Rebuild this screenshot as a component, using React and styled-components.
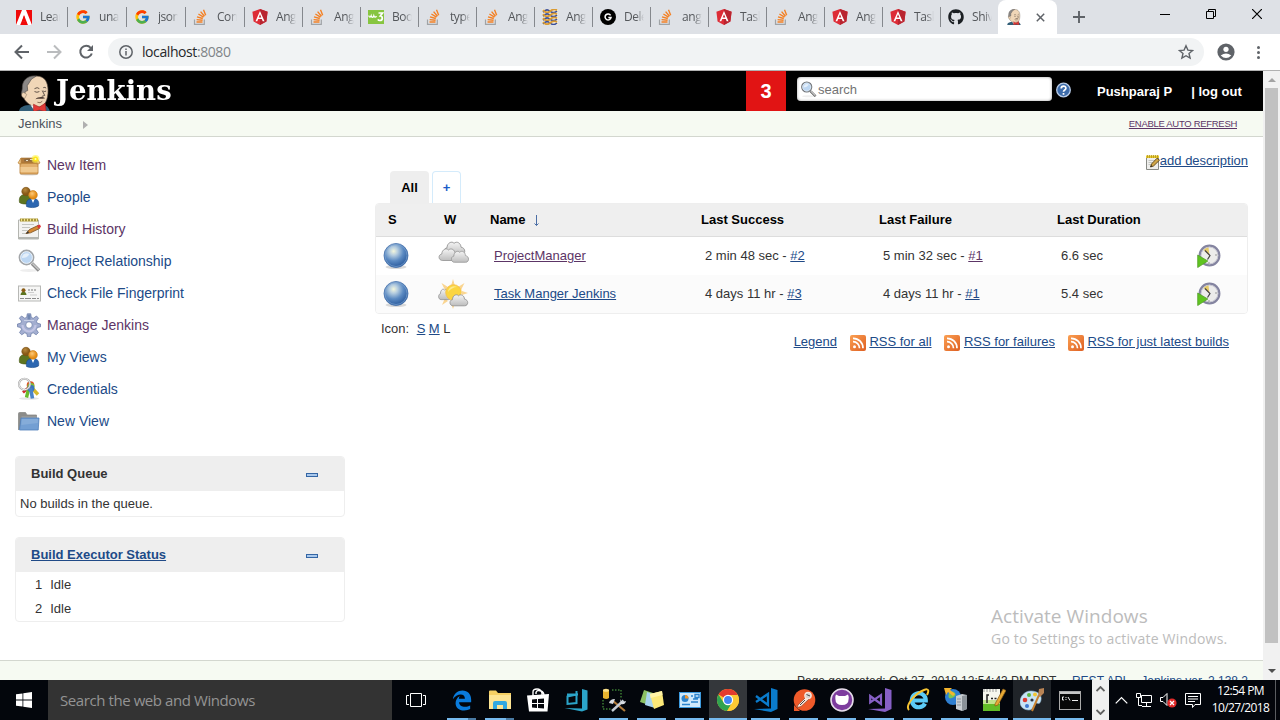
import React from "react";
import styled, { createGlobalStyle, css } from "styled-components";
import { FcGoogle } from "react-icons/fc";
import { FaGithub } from "react-icons/fa";

const UI = `"Open Sans", "Noto Sans", sans-serif`;
const LINK = "#204a87";
const VISITED = "#5c3566";

const Global = createGlobalStyle`
  * { box-sizing: border-box; }
  body { margin: 0; background: #fff; overflow: hidden; }
  svg { display: block; flex: none; }
`;

/* ---------- small drawings ---------- */

const Svg = ({ w = 16, h = w, box, children }) => (
  <svg width={w} height={h} viewBox={box || `0 0 ${w} ${h}`} fill="none">{children}</svg>
);

const AdobeIcon = () => (
  <Svg>
    <path d="M0 1h16v15H0z" fill="#f00a0a" />
    <path d="M0 16 6 1h4l6 15h-4.600l-1.400-3.500H7.300L8.900 9 8 6.500 4.200 16z" fill="#fff" />
    <path d="m8 6 3.900 10H9.700l-1.200-3.200H6z" fill="#f00a0a" />
  </Svg>
);

const StackIcon = () => (
  <Svg>
    <path d="M1.500 10.500v4.800h9.800v-4.800" stroke="#a0a3a6" strokeWidth="1.200" />
    <path d="M3.500 13h6M3.600 10.600l6 .6M4 7.800l5.800 1.700M5.400 5l5.100 3.200M7.600 2.600l3.900 4.700M10.500.8l2.200 5.500" stroke="#f48024" strokeWidth="1.400" />
  </Svg>
);

const AngularIcon = () => (
  <Svg>
    <path d="M8 0 15.600 2.700 14.400 12.500 8 16 1.600 12.500.4 2.700z" fill="#dd2c36" />
    <path d="M8 0l7.600 2.700-1.200 9.800L8 16z" fill="#b92530" />
    <path d="M8 2 3.500 12.200h1.800l.9-2.300h3.600l.9 2.300h1.800zM8 5.300l1.300 3.200H6.700z" fill="#fff" fillRule="evenodd" />
  </Svg>
);

const W3Icon = () => (
  <Svg>
    <rect y="1" width="16" height="14" fill="#87c540" />
    <path d="M.8 6.500c.2 2 1.800 2 2.400.3.500 1.900 2 1.900 2.600 0 .5 1.700 1.800 1.900 2.700.4" stroke="#fff" strokeWidth="1.300" />
    <path d="M10.500 4h4l-2.200 3c2.700.2 2.700 4.600-.5 4.500-1 0-1.600-.5-1.900-1.200" stroke="#fff" strokeWidth="1.700" />
  </Svg>
);

const WaveIcon = () => (
  <Svg>
    <rect width="16" height="16" fill="#f1ead8" />
    {[2.200, 6.200, 10.200, 14].map((y) => (
      <g key={y}>
        <path d={`M1 ${y + 1}q3.500-4 7-1t7 0`} stroke="#3a4f9c" strokeWidth="1.600" />
        <path d={`M1 ${y - 1}q3.500 4 7 1t7-1`} stroke="#d99a33" strokeWidth="1.800" />
      </g>
    ))}
  </Svg>
);

const GIcon = () => (
  <Svg>
    <circle cx="8" cy="8" r="8" fill="#000" />
    <path d="M10.600 6.300A3 3 0 1 0 11 8.500H8.300" stroke="#fff" strokeWidth="1.500" />
  </Svg>
);

const Butler = ({ w = 16, h = 16 }) => (
  <Svg w={w} h={h} box="0 0 34 38">
    <path d="M1 38c0-4 3-6 8-7l16-1c5 1 7 4 8 8z" fill="#335f78" />
    <path d="M9 28C5 24 4 19 5 14 6 5 12 1 19 1c9 0 12 7 12 15 0 9-3 17-10 17-5 0-9-2-12-5z" fill="#f0d6b7" stroke="#4c4038" strokeWidth=".7" />
    <path d="M19 1C9 0 4 6 4.500 14l-1 5 3 3 1-5 2.500-1-.5-5L14 4z" fill="#8b8886" stroke="#55504d" strokeWidth=".7" />
    <path d="M6 18c-3 0-3.500 5 1 6l2-4z" fill="#f0d6b7" stroke="#7b6a58" strokeWidth=".5" />
    <path d="M17 14q3-2 5 0M26 13q2-1 3 .5" stroke="#4d4139" strokeWidth=".9" />
    <path d="M17 17q2.500 1.500 5 0M26 16.500q1.500 1 3 0M25 16l2.500 5-3 1" stroke="#4d4139" strokeWidth=".9" />
    <path d="M18 25c2-3 8-3 10-1-3 1-7 0-10 1z" fill="#4e3d35" />
    <path d="M20 28q3 1.500 5-1" stroke="#7d5f4a" strokeWidth=".9" />
    <path d="m13 31 4 6 3-5z" fill="#f5f5f5" />
    <path d="m16 30 6 3 6-4 1 9-7-2-6 2z" fill="#e13a36" stroke="#a32020" strokeWidth=".6" />
  </Svg>
);

const Plus = () => <Svg w={12}><path d="M6 0v12M0 6h12" stroke="#5f6368" strokeWidth="1.900" /></Svg>;
const TabClose = () => <Svg w={9}><path d="m.8.800 7.400 7.400m0-7.400L.8 8.200" stroke="#5f6368" strokeWidth="1.500" /></Svg>;

const Magnifier = ({ w = 24, dark }) => (
  <Svg w={w} box="0 0 24 24">
    <ellipse cx="12" cy="21.500" rx="9" ry="1.500" fill="#eee" />
    <path d="m15 14.500 7 7" stroke={dark ? "#555" : "#8a8a8a"} strokeWidth="3.400" />
    <path d="m15.500 14.500 6.300 6.300" stroke="#c6c6c6" strokeWidth="1.600" />
    <circle cx="9.500" cy="8.500" r="7" fill="#bcd6f2" stroke={dark ? "#6f7378" : "#a2a5a8"} strokeWidth="1.800" />
    <circle cx="9.500" cy="8.500" r="5.900" stroke="#eef5fc" strokeWidth=".9" />
    <path d="M5 9c0-4 4-6 7.500-4-2 3-4 4-7.500 4" fill="#e4effa" />
  </Svg>
);

const BoxIcon = () => (
  <Svg w={24}>
    <ellipse cx="12" cy="21.500" rx="9" ry="1" fill="#ddd" />
    <path d="M3 10h18v10q0 1-1 1H4q-1 0-1-1z" fill="#e2b06d" stroke="#b57a31" strokeWidth=".8" />
    <path d="M3.500 14h17v5h-17z" fill="#f0ca90" />
    <path d="M4 5h15l1 5H4z" fill="#b37c3c" stroke="#a46f2c" strokeWidth=".6" />
    <path d="m4 5-3 5 3 1.500V8zm16 0 3 5-3 1.500V8zM3 10.500h18" fill="#edc58a" stroke="#c08b43" strokeWidth=".8" />
    <path d="M7 6.500q4-2 9 0v2H7z" fill="#8e6b40" />
    <path d="M9 7.500h2m2-1h3" stroke="#e8e0cc" strokeWidth="1.200" />
    <circle cx="18.500" cy="6" r="4" fill="#fff34d" opacity=".6" />
    <circle cx="18.500" cy="6" r="2.500" fill="#ffe81a" />
    <circle cx="18.500" cy="6" r="1" fill="#fffbc2" />
  </Svg>
);

const PeopleIcon = () => (
  <Svg w={24}>
    <defs>
      <radialGradient id="headA" cx=".4" cy=".3"><stop stopColor="#b98a3e" /><stop offset="1" stopColor="#875815" /></radialGradient>
      <radialGradient id="headB" cx=".4" cy=".35"><stop stopColor="#fdc878" /><stop offset="1" stopColor="#e58e16" /></radialGradient>
    </defs>
    <g transform="translate(0 .5)">
      <path d="M2.500 17c-1-6 2-8 5.500-8s6.500 2 6.500 8c-3 2-9 2-12 0z" fill="#5d7420" stroke="#41540f" strokeWidth=".6" />
      <circle cx="9" cy="6" r="4.200" fill="url(#headA)" stroke="#7a4f12" strokeWidth=".6" />
      <path d="M9.500 21c-1-6 2-8 6.500-8s6.500 2.500 5.500 7.500c-3 2-9 2-12 .5z" fill="#2c66b0" stroke="#1d4a86" strokeWidth=".6" />
      <path d="m14.300 13.500 1.700 4 1.700-4z" fill="#fff" />
      <circle cx="16" cy="9.400" r="4.300" fill="url(#headB)" stroke="#c57610" strokeWidth=".6" />
    </g>
  </Svg>
);

const NotepadIcon = ({ w = 24 }) => (
  <Svg w={w} box="0 0 24 24">
    <path d="M1.500 3h20v19h-20z" fill="#f3f3f1" stroke="#b4b5b0" />
    <path d="M1.500 20h20v2h-20z" fill="#b4b6b1" />
    <path d="M3 1.500h18v3H3z" fill="#a7953a" />
    <path d="M4.500 1.500v3m3-3v3m3-3v3m3-3v3m3-3v3m3-3v3" stroke="#efe08a" />
    <path d="M5 7.500h12m-12 3h8m-8 3h7m-7 3h6" stroke="#c4c6c2" />
    <path d="m9 16.500 3.500-4L21 8.500l1.500 3-9 4.300z" fill="#d58a34" stroke="#7a4e1a" strokeWidth=".8" />
    <path d="m20 8.800 3-1.300 1 2.500-2.500 1.500z" fill="#d33" />
    <path d="m9 16.500 2-2.500 1 2z" fill="#333" />
  </Svg>
);

const EditIcon = () => (
  <Svg>
    <path d="M1.500 3h12v12.500h-12z" fill="#eeeeec" stroke="#888a85" />
    <path d="M1 1.500h13V4H1z" fill="#e8c92f" />
    <path d="M2.500 1v3m2-3v3m2-3v3m2-3v3m2-3v3m2-3v3" stroke="#b39718" strokeWidth=".8" />
    <path d="M3.500 6.500h7m-7 2h5m-5 2h4" stroke="#c4c6c2" />
    <path d="m5.500 13 1-3L12 4.200l2.500 2L8.500 12z" fill="#d0a646" stroke="#5d4517" strokeWidth=".9" />
    <path d="m5.500 13 .6-1.800 1.400 1z" fill="#222" />
  </Svg>
);

const CardIcon = () => (
  <Svg w={24}>
    <rect x="1.500" y="5" width="22" height="15" fill="#f6f6f5" stroke="#b7b8b5" />
    <path d="M3.500 14c0-4.500 6-4.500 6 0z" fill="#5d7420" />
    <circle cx="6.500" cy="9.200" r="2" fill="#8b5d17" />
    <path d="M11 9h8" stroke="#777" strokeDasharray="2 1" />
    <path d="M11 11.500h6m-4 2.500h7" stroke="#cdcdcd" />
    <path d="M3 17.500h19" stroke="#8a8a8a" strokeDasharray="4 1 6 1" />
  </Svg>
);

const GearIcon = () => (
  <Svg w={24}>
    <g fill="#a3aed0" stroke="#7080ab" strokeWidth=".8">
      <path d="M10.300.8h3.400l.6 3.700 2 .8L19.500 3l2 2.200-2 3.100.8 2 3.200.7v2.800l-3.200.7-.9 2.100 2 3-2.200 2.200-3-2-2 .8-.7 3.200h-3l-.7-3.200-2.100-.8-3 2-2.200-2.200 2-3-.8-2.100-3.200-.7V11l3.200-.7.9-2.100-2.200-3L4.500 3l3.200 2.200 2-.8z" />
      <circle cx="12" cy="12" r="3.300" fill="#fff" />
    </g>
    <path d="M7 7.500h10" stroke="#c9d1e6" strokeWidth="1" />
    <path d="M5.500 12a6.500 6.500 0 0 0 13 0" stroke="#c2c5e4" strokeWidth="2.200" />
    <path d="M10.500 1.500h3v5h-3z" fill="#7187b0" />
  </Svg>
);

const KeysIcon = () => (
  <Svg w={24}>
    <ellipse cx="12" cy="21.500" rx="10" ry="1.300" fill="#e6e6e6" />
    <path d="m14 10 7 7.500" stroke="#d6b92c" strokeWidth="3.400" />
    <path d="m11 11-5 4.500" stroke="#d02b2b" strokeWidth="2.800" />
    <path d="M12 10 9.500 20.500" stroke="#69bb2a" strokeWidth="3.400" />
    <circle cx="13.500" cy="8" r="3.800" fill="#e05124" />
    <circle cx="14" cy="9.500" r="3.600" fill="#7fbf3a" />
    <circle cx="14" cy="11.500" r="3.400" fill="#3c74bd" />
    <path d="m13.500 11 2 10.500" stroke="#4a83c8" strokeWidth="3.600" />
    <circle cx="7.500" cy="7.200" r="5.500" stroke="#a6a6a6" strokeWidth="2" />
    <circle cx="7.500" cy="7.200" r="5.500" stroke="#f6f6f6" strokeWidth=".9" />
  </Svg>
);

const FolderIcon = () => (
  <Svg w={24}>
    <path d="M1.500 21V4.500q0-1 1-1h6L10 6h9.500v4" fill="#8c8c8a" stroke="#8a8b88" strokeWidth=".8" />
    <path d="M4.500 7.500h15V12h-15z" fill="#a5a6a4" />
    <path d="M4 9h18l-.8 12H2.500z" fill="#739fd3" stroke="#4f7fba" strokeWidth=".8" />
    <path d="m4.800 10 16.300 0-.3 4-16.400 2z" fill="#85acd9" />
  </Svg>
);

const Ball = () => (
  <Svg w={28}>
    <defs>
      <radialGradient id="ball" cx=".4" cy=".32" r=".68">
        <stop stopColor="#f4f7dc" /><stop offset=".25" stopColor="#b7cee0" /><stop offset=".6" stopColor="#5b8ac2" /><stop offset="1" stopColor="#2a5a9c" />
      </radialGradient>
    </defs>
    <ellipse cx="14" cy="25" rx="10.500" ry="2" fill="#c9c9c9" opacity=".7" />
    <circle cx="14" cy="13.500" r="12" fill="url(#ball)" stroke="#4470ab" strokeWidth=".8" />
    <circle cx="14" cy="13.500" r="11" stroke="#7ba2d0" strokeWidth=".7" />
  </Svg>
);

const cloud = "M5 14c-5 0-5-6-1-6.500C4 3 9 1 11 3.500 14 1 18 3.500 18 7c5 .5 5 7 0 7z";
const Clouds = () => (
  <Svg w={32} h={32}>
    <defs><linearGradient id="cloud" x2="0" y2="1"><stop stopColor="#f4f4f4" /><stop offset="1" stopColor="#bdbdbd" /></linearGradient></defs>
    <g fill="url(#cloud)" stroke="#8f8f8f" strokeWidth=".8">
      <path d={cloud} transform="translate(6 -.5) scale(1 1.100)" />
      <path d={cloud} transform="translate(1 6.500) scale(.95 1)" />
      <path d={cloud} transform="translate(13.500 9) scale(.83 .95)" />
    </g>
  </Svg>
);
const SunClouds = () => (
  <Svg w={32} h={32}>
    <path d="m16 1 2 7h-4zm0 30 2-6h-4zM4.500 5 11 9l-3 3zm23 0L21 9l3 3zM3 16l6-2v4zm28-1-6-2v4zM5 27l3-7 3 3zm22 0-3-7-3 3z" fill="#fad591" />
    <path d={cloud} transform="translate(1 9) scale(.6 .9)" fill="url(#cloud)" stroke="#8f8f8f" />
    <circle cx="16.500" cy="14.500" r="7.800" fill="#fbd540" stroke="#f5bd48" strokeWidth=".8" />
    <path d="M11 14a6 6 0 0 1 9-5c-3 0-7 2-9 5" fill="#fdea8d" />
    <path d={cloud} transform="translate(12 14.500) scale(.86 .95)" fill="url(#cloud)" stroke="#8f8f8f" strokeWidth=".9" />
  </Svg>
);

const BuildClock = () => (
  <Svg w={24}>
    <circle cx="12.500" cy="11.500" r="9.800" fill="#ececeb" stroke="#8484a0" strokeWidth="2.300" />
    <circle cx="12.500" cy="11.500" r="8.400" stroke="#c7c7d2" />
    <path d="m12.500 11.500-6-5.500q3-3 5-2.500z" fill="#e6cb68" />
    <path d="m8 6.500 5 5-2.500 4" stroke="#444" strokeWidth="1.200" />
    <path d="M18 11h2M12 18v2" stroke="#999" />
    <path d="M.7 11 10.800 17 .7 23.500z" fill="#5fc41f" stroke="#55a02c" strokeWidth=".8" />
  </Svg>
);

const RssIcon = () => (
  <Svg>
    <defs><linearGradient id="rss" x2="1" y2="1"><stop stopColor="#fba052" /><stop offset="1" stopColor="#de5f22" /></linearGradient></defs>
    <rect width="16" height="16" rx="2" fill="url(#rss)" />
    <circle cx="4.500" cy="11.800" r="1.500" fill="#fff" />
    <path d="M3 6.700a6.400 6.400 0 0 1 6.500 6.500M3 3.300a9.800 9.800 0 0 1 10 10" stroke="#fff" strokeWidth="1.700" />
  </Svg>
);

const HelpIcon = () => (
  <Svg>
    <circle cx="7.500" cy="8" r="6.800" fill="#3d6cab" stroke="#b9cce8" strokeWidth="1.300" />
    <path d="M5.200 6.500c0-3 4.700-3 4.700-.3C9.900 8 7.500 7.900 7.500 9.800M7.500 11v1.800" stroke="#fff" strokeWidth="1.700" />
  </Svg>
);

const Collapse = () => (
  <Svg w={12} h={4}><rect x=".5" y=".5" width="11" height="3" fill="#a9c8ec" stroke="#3465a4" /></Svg>
);

const Chevron = ({ up, color = "#606060", w = 9, h = 6, sw = 1.800 }) => (
  <Svg w={w} h={h} box="0 0 9 6"><path d={up ? "M.5 5 4.500 1l4 4" : "m.5 1 4 4 4-4"} stroke={color} strokeWidth={sw} /></Svg>
);

/* ---------- taskbar drawings ---------- */

const EdgeE = () => (
  <Svg w={20} h={21} box="0 0 24 24">
    <path d="M1 10.500C2 4 7 0 12.500 0 19 0 23 4.500 23 11v3H8.500c.3 4 3.500 5.500 7 5.500 2.500 0 4.500-.6 6.300-1.600v4.400C20 23.400 17.500 24 14.500 24 8 24 4.500 20 4.300 15.500 4.200 12 6 8.500 9.500 6.700 8.500 8 8.300 9.300 8.300 10h7.200C15.500 6.500 13.500 4.700 10.500 4.700 7 4.700 3.500 7 1 10.500z" fill="#0a7bdc" />
  </Svg>
);
const IeIcon = () => (
  <Svg w={24}>
    <path d="M19 15.500A7 7 0 1 1 19.800 12.500H7" stroke="#5ccbf8" strokeWidth="4.200" />
    <path d="M3 22C-1 18 8 6 18 2c5-2 5 1 3 5" stroke="#f6c433" strokeWidth="2" />
  </Svg>
);
const Explorer = () => (
  <Svg w={22} h={20}>
    <path d="M0 1.500Q0 .5 1 .5h6l2 2.500h13v16H0z" fill="#f5cf63" />
    <path d="M0 5h22v14H0z" fill="#fde493" />
    <path d="M4 19v-6q0-2 2-2h10q2 0 2 2v6h-4v-4H8v4z" fill="#31a8e0" />
  </Svg>
);
const Store = () => (
  <Svg w={22} h={24}>
    <path d="M6 8V4q0-3 4-3t5 4v2M9 6V4.500q1-3 5-1.500 3 1 3 5" stroke="#fff" strokeWidth="1.400" />
    <path d="M0 7.500 22 6l-1.500 17.500H2z" fill="#fff" />
    <path d="m5 11.500 5-.5v4H5zm6-.6 6-.5V15h-6zM5 16h5v4l-5-.4zm6 0h6v4.600l-6-.5z" fill="#05070c" />
  </Svg>
);
const Blend = () => (
  <Svg w={24}>
    <path d="m18 1 5.500 1.500v19L18 23.500.500 20l17.500.5z" fill="#2ba4c9" />
    <path d="m3.500 8.500 9-2v8.500l-9 1zM3 6.500h11M12.500 3v4" stroke="#2ba4c9" strokeWidth="2" />
  </Svg>
);
const Tools = () => (
  <Svg w={24}>
    <path d="M1 2v8q3.500 2 6 0V2z" fill="#e8b32f" /><ellipse cx="4" cy="2.200" rx="3" ry="1.500" fill="#fbe18a" />
    <path d="M10 2h9v9M1 12v9h9" stroke="#58b947" strokeDasharray="1.500 1.500" />
    <path d="m11 13 12 10" stroke="#b07a3a" strokeWidth="2.200" />
    <path d="M21.500 12.500 10 23" stroke="#c6ccd4" strokeWidth="2.400" />
    <path d="M7 15q1-4 6-4l-2 5zm11-4 2 3 4-1q-1 4-5 3z" fill="#d8dde3" />
  </Svg>
);
const Stickies = () => (
  <Svg w={24} h={20}>
    <path d="m4 0 12 4-4 12L0 12z" fill="#8cc063" /><path d="m7 2 12 4-4 12-10-3z" fill="#a9d4ee" />
    <path d="m10 4 12-3 2 14-10 4z" fill="#fbe878" /><path d="m10 4 12-3 .5 4-12 3z" fill="#fff3a6" />
  </Svg>
);
const Panel = () => (
  <Svg w={22} h={16}>
    <rect width="22" height="16" fill="#3d9be0" /><rect x="1" y="1" width="20" height="14" fill="#cfe9fb" />
    <circle cx="6" cy="6.500" r="3.500" fill="#2c83cc" /><path d="M6 6.500V3A3.500 3.500 0 0 1 9.500 6.500z" fill="#f0962e" />
    <path d="M12 4h2m0 3h5m-7 3h7M3 12.500h8M16 2.500h4v3h-4z" stroke="#2c83cc" strokeWidth="1.300" />
  </Svg>
);
const Chrome = () => (
  <Svg w={22} box="0 0 24 24">
    <circle cx="12" cy="12" r="12" fill="#fcc934" />
    <path d="M12 12 1.600 6A12 12 0 0 1 22.400 6z" fill="#e33b2e" />
    <path d="M1.600 6A12 12 0 0 0 11 24l5.800-9.500L12 12l-5 2.500z" fill="#30a350" />
    <path d="M12 6.500h10.600a12 12 0 0 1-11.500 17.500l6-10z" fill="#fcc934" />
    <circle cx="12" cy="12" r="5.600" fill="#fff" /><circle cx="12" cy="12" r="4.300" fill="#4285f4" />
  </Svg>
);
const VsCode = () => (
  <Svg w={24}>
    <path d="m17 0 6.500 2v19L17 24 0 21l17-.5z" fill="#0a7bcc" />
    <path d="m2 8 12 9V6L2 14" stroke="#0a7bcc" strokeWidth="2.300" />
  </Svg>
);
const Postman = () => (
  <Svg w={23}>
    <circle cx="11.500" cy="11" r="10.800" fill="#ef5a2a" /><path d="M1 16v6h6z" fill="#ef5a2a" />
    <path d="m13 8-8 8-1 2.500 4-1 8-7.500z" fill="#fbe6dc" stroke="#7a3a22" strokeWidth=".6" />
    <circle cx="15" cy="6.500" r="3.200" fill="#d9d3d0" stroke="#fbe6dc" strokeWidth="1.200" />
    <path d="m12 11-5 5M13.500 5.500l3.500 1.500" stroke="#444" />
  </Svg>
);
const GitHubDesk = () => (
  <Svg w={24}>
    <circle cx="12" cy="12" r="11" fill="#7d3c9e" stroke="#e6ddea" strokeWidth="1.600" />
    <path d="M6 6.500 9 8h6l3-1.500q1 2 .6 4.500 0 6-6.600 6t-6.600-6Q5 8 6 6.500" fill="#fff" />
  </Svg>
);
const VisualStudio = () => (
  <Svg w={24}>
    <path d="m17 0 6.500 2v19L17 24 0 21l17-.5z" fill="#865fc5" />
    <path d="M2.200 8v6.500L13 7v9z" stroke="#865fc5" strokeWidth="2.200" />
  </Svg>
);
const Server = () => (
  <Svg w={24}>
    <circle cx="9" cy="9" r="8" fill="#2f7fd1" /><path d="M5 5q4-3 6 0t-3 5-3-5m7 8 4-2v4z" fill="#7cc553" />
    <path d="M0 0h8l-2 2 5 4-2 2-5-4-2 3z" fill="#f5b52e" />
    <path d="m12 8 6-2 5 1v14l-5 2-6-2z" fill="#c9ced3" /><path d="m18 8 5-1v14l-5 2z" fill="#8b9299" />
    <path d="M13 11h4m-4 3h4m-4 3h4" stroke="#8b9299" />
  </Svg>
);
const NotepadPP = () => (
  <Svg w={24}>
    <path d="M1 1h17v22H1z" fill="#f6f6ee" /><path d="M1 15h17v8H1z" fill="#62bd27" /><path d="M1 12h17v4H1z" fill="#c2e58e" />
    <path d="M2 1v3m3-3v3m3-3v3m3-3v3m3-3v3" stroke="#999" />
    <path d="M5 15V7h2m2 3.500h2m1.500 0h2" stroke="#222" strokeWidth="1.500" />
    <path d="m13 16 8-15 3 1.500-8 14.500-3 1z" fill="#e6a935" stroke="#8a5b16" strokeWidth=".7" />
  </Svg>
);
const Paint = () => (
  <Svg w={24}>
    <path d="M11 3c7 0 11 4 10 9s-3 3-5 3-2 7-7 7-9-3-9-8S4 3 11 3" fill="#c9e4f5" stroke="#8fbbd8" strokeWidth=".6" />
    <circle cx="5" cy="12" r="2.300" fill="#dd3d33" /><circle cx="9" cy="7" r="2" fill="#5cb745" /><circle cx="15" cy="6.500" r="2" fill="#f3c532" /><circle cx="7" cy="18" r="2" fill="#3f79d0" /><circle cx="12" cy="12" r="1.600" fill="#2b3340" />
    <path d="m12 23 7-16" stroke="#c9822f" strokeWidth="2" /><path d="m18 8 1-7 5-1v5l-4 4z" fill="#b98455" />
  </Svg>
);
const Cmd = () => (
  <Svg w={22} h={19}>
    <rect x=".5" y=".5" width="21" height="18" fill="#080808" stroke="#a9a9a9" /><path d="M1 1h20v2H1z" fill="#c6c6c6" />
    <path d="M5 6H3.500v3H5M7 6v1m0 1v1M9 6l2 3.500M13 9.500h6" stroke="#eee" />
  </Svg>
);

/* ---------- browser ---------- */

const Screen = styled.div`
  width: 1280px; height: 720px; overflow: hidden; display: flex; flex-direction: column;
  position: relative; font: 13px/16px "Liberation Sans", Arial, sans-serif; color: #333;
`;
const TabStrip = styled.div`
  height: 34px; flex: none; background: #dee1e6; padding-left: 9px; display: flex; align-items: stretch;
`;
const Tab = styled.div`
  width: ${(p) => p.$w}px; flex: none; display: flex; align-items: center; gap: 8px; padding-left: 7px; position: relative;
  &:not(:nth-of-type(17))::after {
    content: ""; position: absolute; right: 0; top: 7px; width: 1px; height: 20px; background: #85888d;
  }
`;
const TabTitle = styled.span`
  width: 20px; overflow: hidden; white-space: nowrap; font: 12px/16px ${UI}; letter-spacing: -0.45px; color: #54575b;
  mask-image: linear-gradient(90deg, #000 60%, transparent);
`;
const ActiveTab = styled.div`
  width: 59px; margin-left: -1px; flex: none; background: #fff; border-radius: 8px 8px 0 0; padding-left: 8px;
  display: flex; align-items: center; gap: 14px;
`;
const NewTab = styled.div` display: flex; align-items: center; margin-left: 16px; flex: 1; `;
const WindowButtons = styled.div` display: flex; gap: 36px; padding: 9px 18px 0 0; `;

const AddressRow = styled.div`
  height: 37px; flex: none; background: #fff; border-bottom: 1px solid #b1b1b1; display: flex; align-items: center; padding-left: 14px;
`;
const NavButtons = styled.div` display: flex; align-items: center; gap: 16px; width: 94px; `;
const Omnibox = styled.div`
  width: 1096px; height: 28px; border-radius: 14px; background: #f1f3f4; display: flex; align-items: center; padding: 0 10px 0 11px; gap: 9px;
`;
const Url = styled.div` flex: 1; font: 14px/20px ${UI}; letter-spacing: -0.42px; color: #808488; span { color: #26282b; } `;
const ToolIcons = styled.div` display: flex; align-items: center; gap: 17px; margin-left: 13px; `;

const Viewport = styled.div` display: flex; height: 609px; flex: none; `;
const Page = styled.div` width: 1263px; display: flex; flex-direction: column; `;
const ScrollTrack = styled.div`
  width: 17px; background: #f1f1f1; display: flex; flex-direction: column; align-items: center; padding-top: 7px;
`;
const Thumb = styled.div` width: 13px; height: 555px; background: #c1c1c1; margin: 6px 0 26px; `;

/* ---------- Jenkins page ---------- */

const Header = styled.header` height: 40px; background: #000; display: flex; flex: none; `;
const Brand = styled.div` width: 746px; padding: 4px 0 0 18px; display: flex; overflow: hidden; `;
const BrandName = styled.div`
  color: #fff; font: bold 27px/31px "DejaVu Serif", Georgia, serif; margin: 0 0 0 5px;
  transform: scaleX(1.02); transform-origin: 0 0; height: 30px;
`;
const Alerts = styled.div`
  width: 40px; background: #e11414; color: #fff; font-weight: bold; font-size: 20px; line-height: 40px; text-align: center;
`;
const SearchBox = styled.div`
  margin: 6px 4px 0 11px; width: 255px; height: 24px; border-radius: 4px; background: #fff; display: flex; align-items: center;
  padding: 1px 0 0 3px; gap: 1px; color: #737373; box-shadow: inset 0 0 3px #999;
`;
const HelpWrap = styled.div` padding-top: 11px; width: 41px; `;
const HeaderLink = styled.b` color: #fff; line-height: 41px; margin-right: ${(p) => p.$gap || 0}px; white-space: pre; `;
const Crumbs = styled.nav`
  height: 26px; flex: none; background: #f6faf2; border-bottom: 1px solid #d3d7cf; display: flex; align-items: center;
  padding: 0 26px 0 18px; color: #4d545d;
`;
const CrumbArrow = styled.i`
  border-left: 5px solid #b0b0b0; border-top: 4px solid transparent; border-bottom: 4px solid transparent; margin: 2px auto 0 21px;
`;
const RefreshLink = styled.a` color: ${VISITED}; text-decoration: underline; font-size: 9.500px; letter-spacing: -0.3px; `;

const Content = styled.div` height: 523px; flex: none; display: flex; `;
const Side = styled.aside` width: 345px; padding: 12px 0 0 15px; `;
const Task = styled.a`
  height: 32px; display: flex; align-items: center; gap: 6px; padding-left: 2px; font-size: 14px;
  color: ${(p) => (p.$visited ? VISITED : LINK)};
`;
const Pane = styled.section`
  width: 330px; margin-top: ${(p) => p.$top}px; border: 1px solid #eee; border-radius: 4px; overflow: hidden;
`;
const PaneHead = styled.div`
  height: 34px; background: #eee; font-weight: bold; padding: 0 26px 1px 15px; display: flex; align-items: center; justify-content: space-between;
  color: #333;
  a { color: ${LINK}; text-decoration: underline; }
  svg { margin-top: 2px; }
`;
const PaneBody = styled.div` height: ${(p) => p.$h}px; display: flex; flex-direction: column; padding: 5px 4px 0; `;
const Executors = styled(PaneBody)` padding: 1px 4px 0 19px; `;
const Executor = styled.div` display: flex; gap: 8px; height: 24px; align-items: center; `;

const Main = styled.main` flex: 1; padding: 0 15px 0 30px; `;
const Describe = styled.div` display: flex; justify-content: flex-end; height: 34px; padding-top: 16px; align-items: flex-start; svg { margin: 1px -1px 0 0; } `;
const A = styled.a` text-decoration: underline; color: ${(p) => (p.$visited ? VISITED : LINK)}; `;
const ViewTabs = styled.div` display: flex; gap: 3px; padding-left: 15px; height: 32px; `;
const ViewTab = styled.div`
  width: ${(p) => p.$w}px; border-radius: 4px 4px 0 0; font-weight: bold; text-align: center;
  ${(p) => p.$on
    ? css`background: #eee; color: #000; line-height: 33px;`
    : css`border: 1px solid #d4ebfb; border-bottom: 0; color: #1a5cc8; line-height: 31px;`}
`;
const Table = styled.div` border: 1px solid #eee; border-radius: 4px; overflow: hidden; height: 111px; `;
const Row = styled.div`
  display: grid; grid-template-columns: 56px 50px 211px 178px 178px 140px 1fr; align-items: center; height: 38px;
  background: ${(p) => (p.$alt ? "#fbfbfb" : "#fff")};
`;
const HeadRow = styled(Row)`
  height: 33px; background: #efefef; border-bottom: 1px solid #ddd; color: #000; font-weight: bold; padding-bottom: 1px;
`;
const Cell = styled.div` padding-left: ${(p) => p.$pad}px; white-space: nowrap; `;
const NameHead = styled(Cell)` display: flex; align-items: center; gap: 8px; padding-left: 8px; `;
const SortArrow = () => (
  <Svg w={7} h={14}><path d="M3.500 2v10.500M1.500 10.500l2 2 2-2" stroke="#4b6ea5" /></Svg>
);
const BelowTable = styled.div` display: flex; justify-content: space-between; padding: 7px 19px 0 6px; `;
const IconSizes = styled.div` display: flex; gap: 3.500px; span { margin-right: 4px; } `;
const Feeds = styled.div` display: flex; gap: 12.600px; padding-top: 13px; `;
const Feed = styled.div` display: flex; gap: 3.800px; svg { margin-top: 1px; } `;

const Footer = styled.footer`
  height: 20px; flex: none; background: #f6faf2; border-top: 1px solid #d3d7cf; overflow: hidden; display: flex; justify-content: flex-end;
  gap: 15.500px; padding: 12px 15px 0 0; font-size: 12px; white-space: nowrap;
`;

const Watermark = styled.div`
  position: absolute; left: 991px; top: 604px; color: #bcbcbc; font-family: ${UI}; white-space: nowrap;
  div { font-size: 19px; line-height: 25px; letter-spacing: 0.05px; }
  p { margin: 0; font-size: 14px; line-height: 19px; letter-spacing: 0.2px; }
`;

/* ---------- taskbar ---------- */

const Taskbar = styled.div` height: 40px; flex: none; background: #03060c; display: flex; color: #fff; `;
const Start = styled.div` width: 48px; display: flex; align-items: center; justify-content: center; `;
const WebSearch = styled.div`
  width: 344px; background: #333; color: #949494; font: 15px/40px ${UI}; padding-left: 12px; letter-spacing: -0.42px;
`;
const TaskView = styled.div` width: 51px; padding-left: 14px; display: flex; align-items: center; `;
const AppButton = styled.div`
  width: 38px; display: flex; align-items: center; justify-content: center; position: relative;
  background: ${(p) => p.$bg || "transparent"};
  &::after {
    content: ""; position: absolute; bottom: 0; height: 2px; background: #76b9ed;
    left: ${(p) => (p.$bg ? 0 : 4)}px; width: ${(p) => (!p.$run ? 0 : p.$bg ? 38 : 29)}px;
    ${(p) => p.$run === 2 && css`background: linear-gradient(90deg, #76b9ed 21px, #4a7ba4 21px);`}
  }
`;
const TrayScroll = styled.div`
  width: 17px; margin-left: 3px; background: #f0f0f0; display: flex; flex-direction: column; justify-content: space-between; align-items: center; padding: 6px 0 5px;
`;
const Tray = styled.div` display: flex; align-items: center; padding-left: 6px; gap: 8px; width: 97px; `;
const Clock = styled.div`
  width: 69px; padding-top: 2px; font: 12px/17px ${UI}; letter-spacing: -0.6px; text-align: center; white-space: nowrap;
`;

const tabs = [
  [AdobeIcon, "Lear"], [FcGoogle, "una"], [FcGoogle, "json"], [StackIcon, "Con"], [AngularIcon, "Ang"], [StackIcon, "Ang"],
  [W3Icon, "Boo"], [StackIcon, "type"], [StackIcon, "Ang"], [WaveIcon, "Ang"], [GIcon, "Dele"], [StackIcon, "ang"],
  [AngularIcon, "Task"], [StackIcon, "Ang"], [AngularIcon, "Ang"], [AngularIcon, "Task"], [FaGithub, "Shiv"],
];
const tasks = [
  [BoxIcon, "New Item", 1], [PeopleIcon, "People"], [NotepadIcon, "Build History", 1], [Magnifier, "Project Relationship"],
  [CardIcon, "Check File Fingerprint"], [GearIcon, "Manage Jenkins", 1], [PeopleIcon, "My Views"], [KeysIcon, "Credentials"], [FolderIcon, "New View"],
];
const jobs = [
  { w: Clouds, name: "ProjectManager", v: 1, ok: "2 min 48 sec", okN: "#2", bad: "5 min 32 sec", badN: "#1", badV: 1, d: "6.6 sec" },
  { w: SunClouds, name: "Task Manger Jenkins", ok: "4 days 11 hr", okN: "#3", bad: "4 days 11 hr", badN: "#1", d: "5.4 sec" },
];
const apps = [
  [EdgeE, 2], [Explorer, 2], [Store, 0], [Blend, 0], [Tools, 1], [Stickies, 1], [Panel, 1], [Chrome, 1, "#34373b"], [VsCode, 1],
  [Postman, 1], [GitHubDesk, 1], [VisualStudio, 1], [IeIcon, 1], [Server, 1], [NotepadPP, 1], [Paint, 1, "#202429"], [Cmd, 1],
];

export default function App() {
  return (
    <Screen>
      <Global />
      <TabStrip>
        {tabs.map(([Icon, title], i) => (
          <Tab key={i} $w={i < 4 ? 59 : 58}>
            <Icon size={16} color="#1b1f23" />
            <TabTitle>{title}</TabTitle>
          </Tab>
        ))}
        <ActiveTab><Butler /><TabClose /></ActiveTab>
        <NewTab><Plus /></NewTab>
        <WindowButtons>
          <Svg w={10}><path d="M0 5.500h10" stroke="#000" /></Svg>
          <Svg w={10}><path d="M.5 2.500h7v7h-7zM2.500 2.500v-2h7v7h-2" stroke="#000" /></Svg>
          <Svg w={10}><path d="m0 0 10 10M10 0 0 10" stroke="#000" strokeWidth="1.200" /></Svg>
        </WindowButtons>
      </TabStrip>
      <AddressRow>
        <NavButtons>
          <Svg><path d="M15 8H2m6-6.500L1.500 8 8 14.500" stroke="#5f6368" strokeWidth="2" /></Svg>
          <Svg><path d="M1 8h13M8 1.500 14.500 8 8 14.500" stroke="#babcbe" strokeWidth="2" /></Svg>
          <Svg><path d="M12.700 3.800A5.900 5.900 0 1 0 13.800 9.500" stroke="#5f6368" strokeWidth="2" /><path d="M15 1v6H9z" fill="#5f6368" /></Svg>
        </NavButtons>
        <Omnibox>
          <Svg w={14}><circle cx="7" cy="7" r="6.200" stroke="#5f6368" strokeWidth="1.500" /><path d="M7 6v4.500M7 3.500V5" stroke="#5f6368" strokeWidth="1.500" /></Svg>
          <Url><span>localhost</span>:8080</Url>
          <Svg><path d="m8 1.800 1.900 4.300 4.700.4-3.600 3 1.100 4.600L8 11.700l-4.100 2.400L5 9.500l-3.600-3 4.700-.4z" stroke="#5f6368" strokeWidth="1.400" /></Svg>
        </Omnibox>
        <ToolIcons>
          <Svg w={18}><circle cx="9" cy="9" r="8.600" fill="#5f6368" /><circle cx="9" cy="6.300" r="2.600" fill="#fff" /><path d="M3.700 12.400q5.300-4 10.600 0Q9 17.500 3.700 12.400" fill="#fff" /></Svg>
          <Svg w={12} h={16}><g fill="#5f6368"><circle cx="6.500" cy="3.500" r="1.500" /><circle cx="6.500" cy="8.500" r="1.500" /><circle cx="6.500" cy="13.500" r="1.500" /></g></Svg>
        </ToolIcons>
      </AddressRow>

      <Viewport>
        <Page>
          <Header>
            <Brand><Butler w={33} h={37} /><BrandName>Jenkins</BrandName></Brand>
            <Alerts>3</Alerts>
            <SearchBox><Magnifier w={17} dark />search</SearchBox>
            <HelpWrap><HelpIcon /></HelpWrap>
            <HeaderLink $gap={19}>Pushparaj P</HeaderLink>
            <HeaderLink>| log out</HeaderLink>
          </Header>
          <Crumbs>Jenkins<CrumbArrow /><RefreshLink>ENABLE AUTO REFRESH</RefreshLink></Crumbs>
          <Content>
            <Side>
              {tasks.map(([Icon, label, v]) => (
                <Task key={label} $visited={v}><Icon />{label}</Task>
              ))}
              <Pane $top={19}>
                <PaneHead>Build Queue<Collapse /></PaneHead>
                <PaneBody $h={25}>No builds in the queue.</PaneBody>
              </Pane>
              <Pane $top={20}>
                <PaneHead><a>Build Executor Status</a><Collapse /></PaneHead>
                <Executors $h={49}>
                  <Executor><span>1</span><span>Idle</span></Executor>
                  <Executor><span>2</span><span>Idle</span></Executor>
                </Executors>
              </Pane>
            </Side>
            <Main>
              <Describe><EditIcon /><A>add description</A></Describe>
              <ViewTabs><ViewTab $w={39} $on>All</ViewTab><ViewTab $w={29}>+</ViewTab></ViewTabs>
              <Table>
                <HeadRow>
                  <Cell $pad={12}>S</Cell><Cell $pad={12}>W</Cell><NameHead>Name<SortArrow /></NameHead>
                  <Cell $pad={8}>Last Success</Cell><Cell $pad={8}>Last Failure</Cell><Cell $pad={8}>Last Duration</Cell><Cell />
                </HeadRow>
                {jobs.map((j, i) => (
                  <Row key={j.name} $alt={i}>
                    <Cell $pad={6}><Ball /></Cell>
                    <Cell $pad={5}><j.w /></Cell>
                    <Cell $pad={12}><A $visited={j.v}>{j.name}</A></Cell>
                    <Cell $pad={12}>{j.ok} - <A>{j.okN}</A></Cell>
                    <Cell $pad={12}>{j.bad} - <A $visited={j.badV}>{j.badN}</A></Cell>
                    <Cell $pad={12}>{j.d}</Cell>
                    <Cell $pad={8}><BuildClock /></Cell>
                  </Row>
                ))}
              </Table>
              <BelowTable>
                <IconSizes><span>Icon:</span><A>S</A><A>M</A>L</IconSizes>
                <Feeds>
                  <A>Legend</A>
                  {["RSS for all", "RSS for failures", "RSS for just latest builds"].map((t) => (
                    <Feed key={t}><RssIcon /><A>{t}</A></Feed>
                  ))}
                </Feeds>
              </BelowTable>
            </Main>
          </Content>
          <Footer>
            <span>Page generated: Oct 27, 2018 12:54:43 PM PDT</span><A>REST API</A><A>Jenkins ver. 2.138.2</A>
          </Footer>
        </Page>
        <ScrollTrack>
          <Svg w={8} h={4}><path d="M4 0l4 4H0z" fill="#a3a3a3" /></Svg>
          <Thumb />
          <Svg w={8} h={4}><path d="M0 0h8L4 4z" fill="#505050" /></Svg>
        </ScrollTrack>
      </Viewport>

      <Taskbar>
        <Start><Svg><path d="m0 2.300 6.500-.9v6.100H0zM7.300 1.200 16 0v7.500H7.300zM0 8.400h6.500v6.200L0 13.700zM7.300 8.400H16V16l-8.700-1.200z" fill="#fff" /></Svg></Start>
        <WebSearch>Search the web and Windows</WebSearch>
        <TaskView><Svg w={20} h={14}><path d="M4.500.5h11v13h-11zM3 2.500H.5v9H3M17 2.500h2.500v9H17" stroke="#fff" /></Svg></TaskView>
        {apps.map(([Icon, run, bg], i) => <AppButton key={i} $run={run} $bg={bg}><Icon /></AppButton>)}
        <TrayScroll><Chevron up /><Chevron /></TrayScroll>
        <Tray>
          <Chevron up color="#fff" w={13} h={9} sw={0.9} />
          <Svg w={16}><path d="M5.500 3.500h10v7h-10zM10.500 11v3M6 14.500h9M.5 1.500h4v4h-4zM2.500 5.500v8H6" stroke="#fff" /></Svg>
          <Svg w={17} h={16}><path d="M.5 5.500h2.500l4-4v12l-4-4H.5z" stroke="#fff" /><circle cx="12" cy="11" r="4.600" fill="#e02a2a" /><path d="m10 9 4 4m0-4-4 4" stroke="#fff" strokeWidth="1.300" /></Svg>
          <Svg w={16} h={17}><path d="M.5 1.500h15v11H10l-2.500 3v-3h-7zM3 4.500h10M3 7h10M3 9.500h7" stroke="#fff" /></Svg>
        </Tray>
        <Clock>12:54 PM<br />10/27/2018</Clock>
        <Svg w={5} h={40}><path d="M.5 0v40" stroke="#5a5d61" /></Svg>
      </Taskbar>
      <Watermark><div>Activate Windows</div><p>Go to Settings to activate Windows.</p></Watermark>
    </Screen>
  );
}
